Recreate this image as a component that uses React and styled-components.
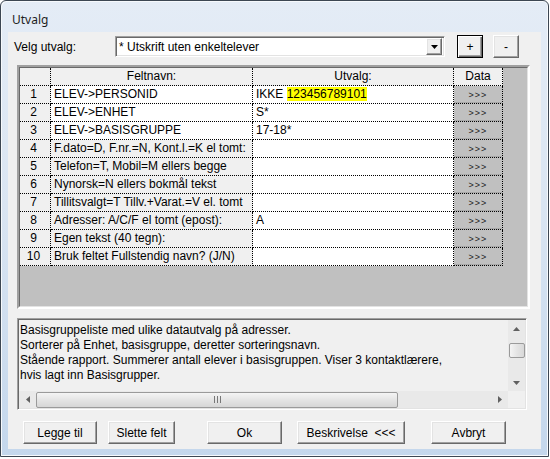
import React from "react";
import styled, { createGlobalStyle, css } from "styled-components";

const GlobalStyle = createGlobalStyle`
  html, body {
    margin: 0;
    padding: 0;
    background: #ffffff;
  }
  body {
    font-family: "Liberation Sans", Arial, sans-serif;
    font-size: 12px;
    color: #000;
  }
  * {
    box-sizing: border-box;
  }
`;

const rows = [
  { name: "ELEV->PERSONID", value: "IKKE ", mark: "123456789101" },
  { name: "ELEV->ENHET", value: "S*" },
  { name: "ELEV->BASISGRUPPE", value: "17-18*" },
  { name: "F.dato=D, F.nr.=N, Kont.l.=K el tomt:", shaded: true },
  { name: "Telefon=T, Mobil=M ellers begge", shaded: true },
  { name: "Nynorsk=N ellers bokmål tekst", shaded: true },
  { name: "Tillitsvalgt=T Tillv.+Varat.=V el. tomt", shaded: true },
  { name: "Adresser: A/C/F el tomt (epost):", value: "A", shaded: true },
  { name: "Egen tekst (40 tegn):", shaded: true },
  { name: "Bruk feltet Fullstendig navn? (J/N)", shaded: true },
];

const description = [
  "Basisgruppeliste med ulike datautvalg på adresser.",
  "Sorterer på Enhet, basisgruppe, deretter sorteringsnavn.",
  "Stående rapport. Summerer antall elever i basisgruppen. Viser 3 kontaktlærere,",
  "hvis lagt inn Basisgrupper.",
];

const buttons = [
  { label: "Legge til", w: 74, ml: 0 },
  { label: "Slette felt", w: 67, ml: 11 },
  { label: "Ok", w: 75, ml: 32 },
  { label: "Beskrivelse  <<<", w: 108, ml: 15 },
  { label: "Avbryt", w: 75, ml: 26 },
];

const Arrow = ({ dir }) => {
  const pts = {
    up: "0,4 3.5,0 7,4",
    down: "0,0 7,0 3.5,4",
    left: "4,0 4,7 0,3.5",
    right: "0,0 4,3.5 0,7",
  }[dir];
  const vertical = dir === "up" || dir === "down";
  return (
    <svg width={vertical ? 7 : 4} height={vertical ? 4 : 7}>
      <polygon points={pts} fill="#606060" />
    </svg>
  );
};

const App = () => {
  return (
    <>
      <GlobalStyle />
      <Window>
        <TitleBar>Utvalg</TitleBar>
        <Client>
          <TopRow>
            <Label>Velg utvalg:</Label>
            <Combo>
              <ComboText>* Utskrift uten enkeltelever</ComboText>
              <DropBtn>
                <svg width="7" height="4">
                  <polygon points="0,0 7,0 3.5,4" fill="#000" />
                </svg>
              </DropBtn>
            </Combo>
            <SmallBtn $default $ml={12}>+</SmallBtn>
            <SmallBtn $ml={10}>-</SmallBtn>
          </TopRow>

          <GridFrame>
            <GridInner>
              <Table>
                <Cell $bg="#f0f0f0" />
                <Cell $bg="#f0f0f0" $align="center">Feltnavn:</Cell>
                <Cell $bg="#f0f0f0" $align="center">Utvalg:</Cell>
                <Cell $bg="#f0f0f0" $align="center">Data</Cell>
                {rows.map((r, i) => (
                  <React.Fragment key={r.name}>
                    <Cell $bg="#f0f0f0" $align="center" $num>
                      {i + 1}
                    </Cell>
                    <Cell $bg={r.shaded ? "#f0f0f0" : "#ffffff"}>{r.name}</Cell>
                    <Cell $bg="#ffffff">
                      {r.value}
                      {r.mark && <Mark>{r.mark}</Mark>}
                    </Cell>
                    <DataCell>&gt;&gt;&gt;</DataCell>
                  </React.Fragment>
                ))}
              </Table>
            </GridInner>
          </GridFrame>

          <DescBox>
            <DescMain>
              <DescText>
                {description.map((line) => (
                  <div key={line}>{line}</div>
                ))}
              </DescText>
              <VScroll>
                <ArrowBox>
                  <Arrow dir="up" />
                </ArrowBox>
                <VTrack>
                  <VThumb />
                </VTrack>
                <ArrowBox>
                  <Arrow dir="down" />
                </ArrowBox>
              </VScroll>
            </DescMain>
            <HScrollRow>
              <ArrowBox>
                <Arrow dir="left" />
              </ArrowBox>
              <HTrack>
                <HThumb>
                  <svg width="7" height="7">
                    <rect x="0" y="0" width="1" height="7" fill="#777" />
                    <rect x="3" y="0" width="1" height="7" fill="#777" />
                    <rect x="6" y="0" width="1" height="7" fill="#777" />
                  </svg>
                </HThumb>
              </HTrack>
              <ArrowBox>
                <Arrow dir="right" />
              </ArrowBox>
              <Corner />
            </HScrollRow>
          </DescBox>

          <ButtonRow>
            {buttons.map((b) => (
              <Button key={b.label} $w={b.w} $ml={b.ml}>
                {b.label}
              </Button>
            ))}
          </ButtonRow>
        </Client>
      </Window>
    </>
  );
};

const raised = css`
  background: #f0f0f0;
  border: 1px solid;
  border-color: #ffffff #696969 #696969 #ffffff;
  box-shadow: inset -1px -1px 0 #a0a0a0, inset 1px 1px 0 #e3e3e3;
`;

const Window = styled.div`
  width: 549px;
  height: 457px;
  border: 1px solid #3c4652;
  border-radius: 6px 6px 0 0;
  background: linear-gradient(to bottom, #e4ecf6 0%, #dae5f2 45%, #c4d7ec 100%);
  box-shadow: inset 1px 1px 0 #f6f9fc, inset -1px -1px 0 #f6f9fc;
  display: flex;
  flex-direction: column;
  padding: 0 7px 7px 7px;
`;

const TitleBar = styled.div`
  height: 31px;
  padding: 6px 0 0 4px;
  display: flex;
  align-items: center;
  font-family: "Noto Sans", "Liberation Sans", sans-serif;
  font-size: 12px;
  color: #1e1e1e;
`;

const Client = styled.div`
  flex: 1;
  background: #f0f0f0;
  display: flex;
  flex-direction: column;
`;

const TopRow = styled.div`
  margin-top: 3px;
  height: 23px;
  display: flex;
  align-items: center;
  padding-left: 6px;
`;

const Label = styled.div`
  width: 101px;
`;

const Combo = styled.div`
  width: 330px;
  height: 21px;
  display: flex;
  align-items: center;
  background: #ffffff;
  border: 1px solid;
  border-color: #a0a0a0 #ffffff #ffffff #a0a0a0;
  box-shadow: inset 1px 1px 0 #696969, inset -1px -1px 0 #e3e3e3;
  padding: 2px 2px 2px 2px;
`;

const ComboText = styled.div`
  flex: 1;
  padding-left: 1px;
  white-space: nowrap;
`;

const DropBtn = styled.div`
  ${raised};
  width: 16px;
  height: 17px;
  display: flex;
  align-items: center;
  justify-content: center;
`;

const SmallBtn = styled.div`
  ${raised};
  width: 26px;
  height: 23px;
  margin-left: ${(p) => p.$ml}px;
  display: flex;
  align-items: center;
  justify-content: center;
  font-size: 12px;
  ${(p) =>
    p.$default &&
    css`
      border-color: #000 #000 #000 #000;
      box-shadow: inset 1px 1px 0 #ffffff, inset -1px -1px 0 #696969, inset -2px -2px 0 #a0a0a0;
    `}
`;

const GridFrame = styled.div`
  margin: 7px 0 0 9px;
  width: 513px;
  height: 244px;
  border: 2px solid;
  border-color: #a0a0a0 #ffffff #ffffff #a0a0a0;
`;

const GridInner = styled.div`
  height: 100%;
  border: 1px solid;
  border-color: #696969 #e3e3e3 #e3e3e3 #696969;
  background: #c0c0c0;
`;

const Table = styled.div`
  display: grid;
  grid-template-columns: 31px 202px 201px 49px;
  grid-auto-rows: 18px;
`;

const Cell = styled.div`
  background: ${(p) => p.$bg};
  border-right: 1px dotted #000;
  border-bottom: 1px dotted #000;
  line-height: 17px;
  padding: ${(p) => (p.$num ? "0 3px 0 0" : "0 3px")};
  text-align: ${(p) => p.$align || "left"};
  white-space: nowrap;
  overflow: hidden;
`;

const Mark = styled.span`
  background: #ffff00;
`;

const DataCell = styled.div`
  background: #c0c0c0;
  border-right: 1px dotted #000;
  border-bottom: 1px dotted #000;
  box-shadow: inset 0 -1px 0 #a8a8a8;
  font-size: 9px;
  letter-spacing: 1px;
  color: #202020;
  display: flex;
  align-items: center;
  justify-content: center;
`;

const DescBox = styled.div`
  margin: 9px 0 0 9px;
  width: 510px;
  height: 92px;
  border: 1px solid;
  border-color: #a0a0a0 #ffffff #ffffff #a0a0a0;
  box-shadow: inset 1px 1px 0 #696969, inset -1px -1px 0 #e3e3e3;
  padding: 1px;
  display: flex;
  flex-direction: column;
`;

const DescMain = styled.div`
  flex: 1;
  display: flex;
  min-height: 0;
`;

const DescText = styled.div`
  flex: 1;
  padding: 3px 0 0 1px;
  line-height: 15px;
  white-space: nowrap;
  overflow: hidden;
`;

const VScroll = styled.div`
  width: 17px;
  display: flex;
  flex-direction: column;
  background: #e9e9e9;
`;

const ArrowBox = styled.div`
  width: 17px;
  height: 17px;
  flex: none;
  display: flex;
  align-items: center;
  justify-content: center;
`;

const VTrack = styled.div`
  flex: 1;
  padding-top: 6px;
  display: flex;
  justify-content: center;
`;

const VThumb = styled.div`
  width: 16px;
  height: 15px;
  border: 1px solid #9a9a9a;
  border-radius: 2px;
  background: linear-gradient(to right, #f4f4f4, #e4e4e4 50%, #d8d8d8);
`;

const HScrollRow = styled.div`
  height: 17px;
  display: flex;
  background: #e9e9e9;
`;

const HTrack = styled.div`
  flex: 1;
  display: flex;
  align-items: center;
`;

const HThumb = styled.div`
  width: 362px;
  height: 16px;
  border: 1px solid #9a9a9a;
  border-radius: 2px;
  background: linear-gradient(to bottom, #f4f4f4, #e4e4e4 50%, #d6d6d6);
  display: flex;
  align-items: center;
  justify-content: center;
`;

const Corner = styled.div`
  width: 17px;
  background: #f0f0f0;
`;

const ButtonRow = styled.div`
  margin-top: 11px;
  height: 23px;
  display: flex;
  padding-left: 15px;
`;

const Button = styled.div`
  ${raised};
  width: ${(p) => p.$w}px;
  margin-left: ${(p) => p.$ml}px;
  height: 23px;
  display: flex;
  align-items: center;
  justify-content: center;
  white-space: pre;
`;

export default App;
